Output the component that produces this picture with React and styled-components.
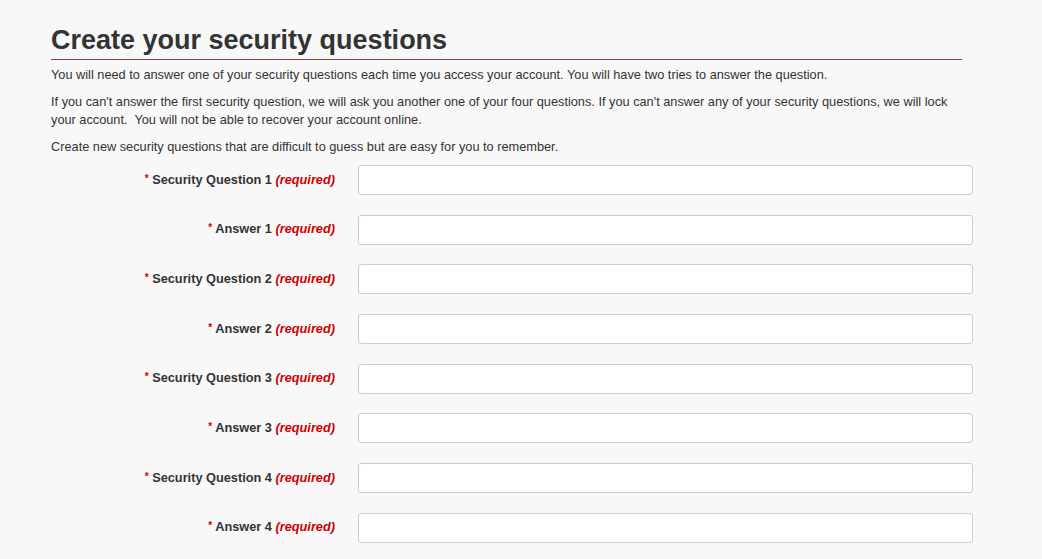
import styled, { createGlobalStyle } from "styled-components";

const GlobalStyle = createGlobalStyle`
  body {
    margin: 0;
    background: #f8f8f8;
    font-family: "Liberation Sans", Arial, sans-serif;
    color: #333;
  }
`;

const questions = [1, 2, 3, 4];

export default function App() {
    return (
        <>
            <GlobalStyle />
            <Page>
                <Title>Create your security questions</Title>
                <Text>You will need to answer one of your security questions each time you access your account. You will have two tries to answer the question.</Text>
                <Text>If you can't answer the first security question, we will ask you another one of your four questions. If you can't answer any of your security questions, we will lock your account.&nbsp; You will not be able to recover your account online.</Text>
                <Text>Create new security questions that are difficult to guess but are easy for you to remember.</Text>
                <Form>
                    {questions.map(n => (
                        <div key={n}>
                            <Field label={`Security Question ${n}`} />
                            <Field label={`Answer ${n}`} />
                        </div>
                    ))}
                </Form>
            </Page>
        </>
    )
}

function Field({ label }) {
    return (
        <Row>
            <Label>
                <Star>*</Star> {label} <Required>(required)</Required>
            </Label>
            <Input type="text" />
        </Row>
    )
}

const Page = styled.div`
    width: 911px;
    padding: 24px 0 0 51px;
`

const Title = styled.h1`
    margin: 0;
    font-size: 27px;
    font-weight: 700;
    line-height: 33px;
    color: #333;
    border-bottom: 1px solid #a33a3a;
    padding-bottom: 2px;
    margin-bottom: 6px;
`

const Text = styled.p`
    margin: 0 0 9px;
    font-size: 12.75px;
    line-height: 18px;
    color: #333;
`

const Form = styled.form`
    margin-top: 9px;
`

const Row = styled.div`
    display: flex;
    align-items: center;
    gap: 23px;
    height: 30px;
    margin-bottom: 19.7px;
`

const Label = styled.label`
    flex-shrink: 0;
    width: 284px;
    margin-bottom: 2px;
    text-align: right;
    font-size: 12.75px;
    font-weight: 700;
    color: #333;
`

const Star = styled.span`
    color: #c00;
    font-size: 10px;
    vertical-align: 2px;
`

const Required = styled.em`
    color: #c00;
`

const Input = styled.input`
    flex-shrink: 0;
    box-sizing: border-box;
    width: 615px;
    height: 30px;
    border: 1px solid #ccc;
    border-radius: 3px;
    background: #fff;
    padding: 4px 8px;
    font-size: 13px;
`
